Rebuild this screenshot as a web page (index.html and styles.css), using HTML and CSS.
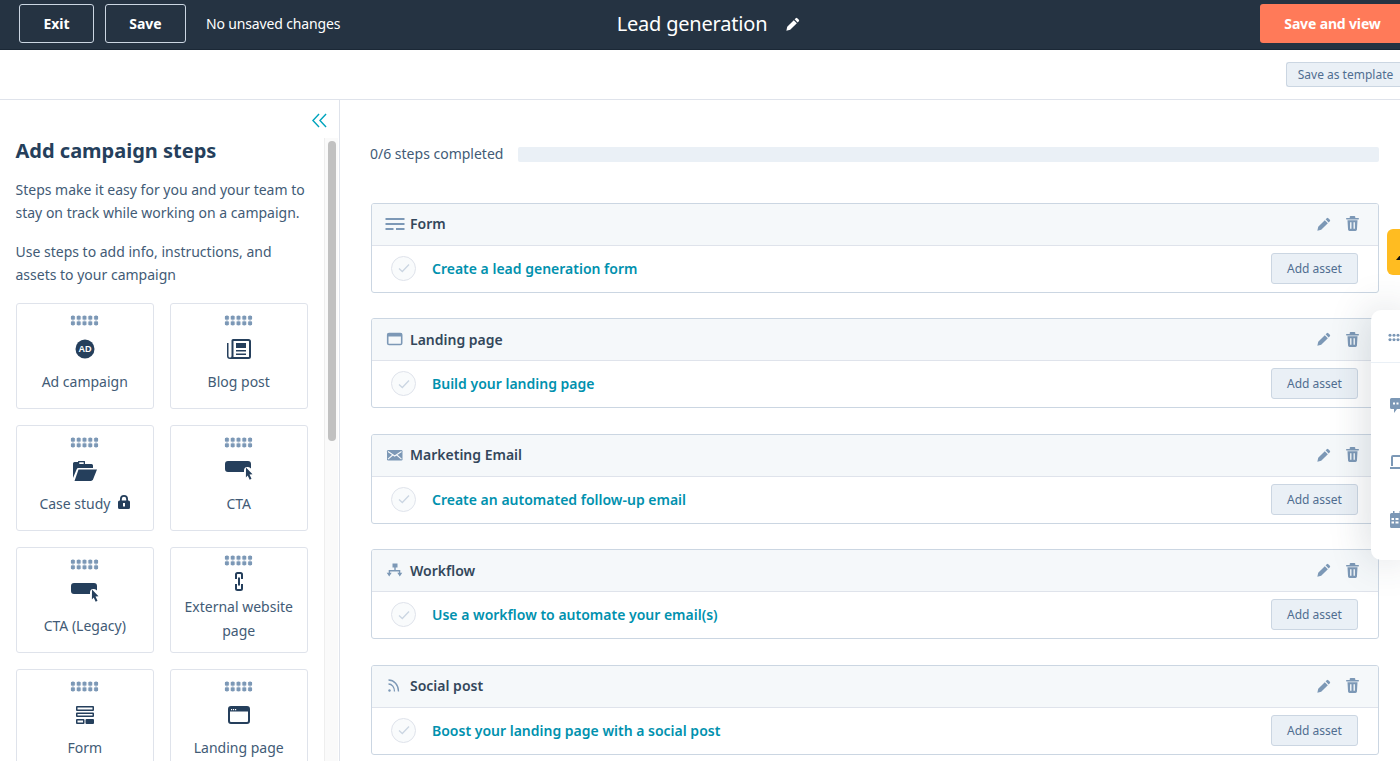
FILE: index.html
```html
<!DOCTYPE html>
<html lang="en">

<head>
    <meta charset="UTF-8">
    <meta name="viewport" content="width=device-width, initial-scale=1.0">
    <title>Lead generation</title>
    <link rel="stylesheet" href="styles.css">
</head>

<body>

    <svg class="sprites" width="0" height="0" aria-hidden="true">
        <symbol id="pencil" viewBox="0 0 16 16">
            <path d="M11.2 1.3a1.2 1.2 0 0 1 1.7 0l1.8 1.8a1.2 1.2 0 0 1 0 1.7l-1.4 1.4-3.5-3.5zM8.9 3.6l3.5 3.5-7.6 7.6-4.4 1 1-4.5z" />
        </symbol>
        <symbol id="trash" viewBox="0 0 14 16">
            <path d="M5 0h4a1 1 0 0 1 1 1v1h3.2a.8.8 0 0 1 0 1.6H.8A.8.8 0 0 1 .8 2H4V1a1 1 0 0 1 1-1z" />
            <path fill-rule="evenodd" d="M1.6 4.6h10.8l-.6 9.9a1.6 1.6 0 0 1-1.6 1.5H3.8a1.6 1.6 0 0 1-1.6-1.5zM4.4 6.6v7h1.5v-7zm3.7 0v7h1.5v-7z" />
        </symbol>
        <symbol id="cta" viewBox="0 0 28 22">
            <path d="M3 1h20a3 3 0 0 1 3 3v4.400a4 4 0 0 0-4-1.400 3.500 3.500 0 0 0-3 3.300v1.700H3a3 3 0 0 1-3-3V4a3 3 0 0 1 3-3z" />
            <path d="M21 7.500l6.500 6.800-3 .3 2 4.200-1.800.9-2-4.300-1.800 2z" />
        </symbol>
    </svg>

    <header class="topbar">
        <div class="topbar-left">
            <button class="btn-dark btn-exit">Exit</button>
            <button class="btn-dark btn-save">Save</button>
            <span class="save-status">No unsaved changes</span>
        </div>
        <div class="topbar-title">
            <span>Lead generation</span>
            <svg class="title-edit" width="14" height="14"><use href="#pencil" /></svg>
        </div>
        <button class="btn-primary">Save and view</button>
    </header>

    <div class="subbar">
        <button class="btn-template">Save as template</button>
    </div>

    <div class="layout">
        <aside class="sidebar">
            <div class="collapse-row">
                <svg width="15" height="15" viewBox="0 0 16 16" fill="none" stroke="#00a4bd" stroke-width="1.500">
                    <path d="M7.500 1L1 8l6.500 7M15 1L8.500 8l6.500 7" />
                </svg>
            </div>
            <div class="sidebar-body">
                <div class="sidebar-content">
                    <h2>Add campaign steps</h2>
                    <p>Steps make it easy for you and your team to stay on track while working on a campaign.</p>
                    <p>Use steps to add info, instructions, and assets to your campaign</p>
                    <div class="step-grid">
                        <div class="step-tile">
                            <span class="grip"></span>
                            <span class="tile-icon">
                                <svg width="20" height="20" viewBox="0 0 20 20">
                                    <circle cx="10" cy="10" r="9.500" fill="#253f5c" />
                                    <text x="10" y="13.200" text-anchor="middle" class="ad-mark">AD</text>
                                </svg>
                            </span>
                            <span class="tile-label">Ad campaign</span>
                        </div>
                        <div class="step-tile">
                            <span class="grip"></span>
                            <span class="tile-icon">
                                <svg width="24" height="20" viewBox="0 0 24 20">
                                    <path fill="#253f5c" fill-rule="evenodd" d="M6 0h15.500A2.500 2.500 0 0 1 24 2.500v15a2.500 2.500 0 0 1-2.500 2.500H3a3 3 0 0 1-3-3V4h1.500v13a1.500 1.500 0 0 0 3 0V1.500A1.500 1.500 0 0 1 6 0zm.500 2v15.500c0 .200 0 .400-.100.500h15.100a.5.500 0 0 0 .500-.500V2.500a.5.500 0 0 0-.500-.500z" />
                                    <path fill="#253f5c" d="M9 4h10v5H9zM9 11h10v1.600H9zM9 14.500h10v1.600H9z" />
                                </svg>
                            </span>
                            <span class="tile-label">Blog post</span>
                        </div>
                        <div class="step-tile">
                            <span class="grip"></span>
                            <span class="tile-icon">
                                <svg width="24" height="20" viewBox="0 0 24 20" fill="#253f5c">
                                    <path d="M0 2.500A1.500 1.500 0 0 1 1.500 1H5V.5a.5.500 0 0 1 .500-.500h6a.5.500 0 0 1 .500.500V3h6.500A1.500 1.500 0 0 1 20 4.500V7H5.500a2 2 0 0 0-1.900 1.400L0 17z" />
                                    <path d="M5.500 8.500H24l-4 10a2.400 2.400 0 0 1-2.200 1.500H1.500z" />
                                    <path fill="#fff" d="M6.300 1.300h4.400V3H6.300z" />
                                </svg>
                            </span>
                            <span class="tile-label">Case study
                                <svg class="lock" width="12" height="14" viewBox="0 0 12 14" fill="#253f5c">
                                    <path fill-rule="evenodd" d="M6 0a4 4 0 0 1 4 4v1.500h.500A1.500 1.500 0 0 1 12 7v5.500a1.500 1.500 0 0 1-1.500 1.500h-9A1.500 1.500 0 0 1 0 12.500V7a1.500 1.500 0 0 1 1.500-1.500H2V4a4 4 0 0 1 4-4zm0 1.800A2.200 2.200 0 0 0 3.800 4v1.500h4.400V4A2.200 2.200 0 0 0 6 1.800zM5 8v3.500h2V8z" />
                                </svg>
                            </span>
                        </div>
                        <div class="step-tile">
                            <span class="grip"></span>
                            <span class="tile-icon"><svg class="icon-cta" width="28" height="22"><use href="#cta" /></svg></span>
                            <span class="tile-label">CTA</span>
                        </div>
                        <div class="step-tile">
                            <span class="grip"></span>
                            <span class="tile-icon"><svg class="icon-cta" width="28" height="22"><use href="#cta" /></svg></span>
                            <span class="tile-label">CTA (Legacy)</span>
                        </div>
                        <div class="step-tile step-tile-tall">
                            <span class="grip"></span>
                            <span class="tile-icon">
                                <svg width="10" height="19" viewBox="0 0 10 19" fill="none" stroke="#253f5c" stroke-width="2">
                                    <path d="M2 7V2.500A1.500 1.500 0 0 1 3.500 1h3A1.500 1.500 0 0 1 8 2.500V7M2 12v4.500A1.500 1.500 0 0 0 3.500 18h3A1.500 1.500 0 0 0 8 16.500V12M5 5.500v8" />
                                </svg>
                            </span>
                            <span class="tile-label">External website page</span>
                        </div>
                        <div class="step-tile">
                            <span class="grip"></span>
                            <span class="tile-icon">
                                <svg width="18" height="18" viewBox="0 0 18 18" fill="#253f5c">
                                    <path fill-rule="evenodd" d="M1 0h16a1 1 0 0 1 1 1v3a1 1 0 0 1-1 1H1a1 1 0 0 1-1-1V1a1 1 0 0 1 1-1zm.500 1.500v2h15v-2z" />
                                    <path fill-rule="evenodd" d="M1 6.500h16a1 1 0 0 1 1 1v2.500a1 1 0 0 1-1 1H1a1 1 0 0 1-1-1V7.500a1 1 0 0 1 1-1zM1.500 8v1.500h15V8z" />
                                    <path fill-rule="evenodd" d="M1 13h6.500a1 1 0 0 1 1 1v3a1 1 0 0 1-1 1H1a1 1 0 0 1-1-1v-3a1 1 0 0 1 1-1zm.500 1.500v2h5.500v-2z" />
                                    <path d="M10.500 13H17a1 1 0 0 1 1 1v3a1 1 0 0 1-1 1h-6.500a1 1 0 0 1-1-1v-3a1 1 0 0 1 1-1z" />
                                </svg>
                            </span>
                            <span class="tile-label">Form</span>
                        </div>
                        <div class="step-tile">
                            <span class="grip"></span>
                            <span class="tile-icon">
                                <svg width="22" height="18" viewBox="0 0 22 18">
                                    <rect x="1" y="1" width="20" height="16" rx="2" fill="none" stroke="#253f5c" stroke-width="2" />
                                    <path fill="#253f5c" d="M1 2h20v3.500H1z" />
                                    <path fill="#fff" d="M3 3h1.200v1.200H3zM5 3h1.200v1.200H5zM7 3h1.200v1.200H7z" />
                                </svg>
                            </span>
                            <span class="tile-label">Landing page</span>
                        </div>
                    </div>
                </div>
                <div class="scroll-track"><div class="scroll-thumb"></div></div>
            </div>
        </aside>

        <main class="main">
            <div class="progress-row">
                <span>0/6 steps completed</span>
                <div class="progress-bar"></div>
            </div>

            <section class="step-card">
                <div class="step-head">
                    <svg width="20" height="14" viewBox="0 0 20 14" fill="#7c98b6">
                        <path d="M.5 1h19v2H.5zM.5 6h19v2H.5zM.5 11h8v2h-8zM11 11h8.500v2H11z" />
                    </svg>
                    <span class="step-name">Form</span>
                    <svg class="act" width="14" height="14"><use href="#pencil" /></svg>
                    <svg class="act" width="13" height="15"><use href="#trash" /></svg>
                </div>
                <div class="step-body">
                    <span class="check"><svg width="12" height="10" viewBox="0 0 12 10" fill="none" stroke="#cbd6e2" stroke-width="1.300"><path d="M1 5.500l3.300 3L11 1.500" /></svg></span>
                    <a class="step-link">Create a lead generation form</a>
                    <button class="btn-asset">Add asset</button>
                </div>
            </section>

            <section class="step-card">
                <div class="step-head">
                    <svg width="20" height="14" viewBox="0 0 20 14">
                        <rect x="2.700" y="1.500" width="14" height="11" rx="1.300" fill="none" stroke="#7c98b6" stroke-width="1.600" />
                        <path fill="#7c98b6" d="M2.700 1.500h14v3h-14z" />
                    </svg>
                    <span class="step-name">Landing page</span>
                    <svg class="act" width="14" height="14"><use href="#pencil" /></svg>
                    <svg class="act" width="13" height="15"><use href="#trash" /></svg>
                </div>
                <div class="step-body">
                    <span class="check"><svg width="12" height="10" viewBox="0 0 12 10" fill="none" stroke="#cbd6e2" stroke-width="1.300"><path d="M1 5.500l3.300 3L11 1.500" /></svg></span>
                    <a class="step-link">Build your landing page</a>
                    <button class="btn-asset">Add asset</button>
                </div>
            </section>

            <section class="step-card">
                <div class="step-head">
                    <svg width="20" height="14" viewBox="0 0 20 14">
                        <rect x="2" y="2" width="15.500" height="10.500" rx="1.200" fill="#7c98b6" />
                        <path d="M3 3.500l6.700 4.500 6.800-4.500M3 11.200l4.700-4.200M16.500 11.200l-4.700-4.200" fill="none" stroke="#f5f8fa" stroke-width="1.100" />
                    </svg>
                    <span class="step-name">Marketing Email</span>
                    <svg class="act" width="14" height="14"><use href="#pencil" /></svg>
                    <svg class="act" width="13" height="15"><use href="#trash" /></svg>
                </div>
                <div class="step-body">
                    <span class="check"><svg width="12" height="10" viewBox="0 0 12 10" fill="none" stroke="#cbd6e2" stroke-width="1.300"><path d="M1 5.500l3.300 3L11 1.500" /></svg></span>
                    <a class="step-link">Create an automated follow-up email</a>
                    <button class="btn-asset">Add asset</button>
                </div>
            </section>

            <section class="step-card">
                <div class="step-head">
                    <svg width="20" height="14" viewBox="0 0 20 14" fill="#7c98b6">
                        <path d="M7.500 .5h5v4h-5z" />
                        <path d="M9.300 4h1.400v3h4.600v3h-1.400V8.400H5.100V10H3.700V7h5.600z" />
                        <path d="M1.700 9.800h5L4.200 13.500zM12.300 9.800h5l-2.500 3.700z" />
                    </svg>
                    <span class="step-name">Workflow</span>
                    <svg class="act" width="14" height="14"><use href="#pencil" /></svg>
                    <svg class="act" width="13" height="15"><use href="#trash" /></svg>
                </div>
                <div class="step-body">
                    <span class="check"><svg width="12" height="10" viewBox="0 0 12 10" fill="none" stroke="#cbd6e2" stroke-width="1.300"><path d="M1 5.500l3.300 3L11 1.500" /></svg></span>
                    <a class="step-link">Use a workflow to automate your email(s)</a>
                    <button class="btn-asset">Add asset</button>
                </div>
            </section>

            <section class="step-card">
                <div class="step-head">
                    <svg width="20" height="14" viewBox="0 0 20 14" fill="none" stroke="#7c98b6" stroke-width="1.300">
                        <path d="M3.500 1c5.500 0 10 4.800 10 11.500M3.500 5c3.500 0 6 3.300 6 7.500" />
                        <circle cx="4.500" cy="11.500" r="1.200" fill="#7c98b6" stroke="none" />
                    </svg>
                    <span class="step-name">Social post</span>
                    <svg class="act" width="14" height="14"><use href="#pencil" /></svg>
                    <svg class="act" width="13" height="15"><use href="#trash" /></svg>
                </div>
                <div class="step-body">
                    <span class="check"><svg width="12" height="10" viewBox="0 0 12 10" fill="none" stroke="#cbd6e2" stroke-width="1.300"><path d="M1 5.500l3.300 3L11 1.500" /></svg></span>
                    <a class="step-link">Boost your landing page with a social post</a>
                    <button class="btn-asset">Add asset</button>
                </div>
            </section>
        </main>
    </div>

    <div class="help-tab"><span class="help-mark"></span></div>

    <div class="side-dock">
        <div class="dock-head"><span class="dock-grip"></span></div>
        <svg class="dock-chat" width="14" height="16" viewBox="0 0 14 16" fill="#7c98b6">
            <path fill-rule="evenodd" d="M1.500 0h11A1.500 1.500 0 0 1 14 1.500v8a1.500 1.500 0 0 1-1.500 1.500H7l-3 4v-4H1.500A1.500 1.500 0 0 1 0 9.500v-8A1.500 1.500 0 0 1 1.500 0zM3 4.500v2h2v-2zm3.500 0v2h2v-2z" />
        </svg>
        <svg class="dock-laptop" width="16" height="16" viewBox="0 0 16 16" fill="none" stroke="#7c98b6" stroke-width="2">
            <path d="M2 12V3a1 1 0 0 1 1-1h13M0 14h16" />
        </svg>
        <svg class="dock-cal" width="14" height="17" viewBox="0 0 14 17" fill="#7c98b6">
            <path fill-rule="evenodd" d="M3 0h1.500v2h5V0H11v2h1.500A1.500 1.500 0 0 1 14 3.500v12a1.500 1.500 0 0 1-1.500 1.500h-11A1.500 1.500 0 0 1 0 15.500v-12A1.500 1.500 0 0 1 1.500 2H3zM1.500 7v2h2.500V7zm4 0v2h3V7zm4.500 0v2h4V7zM1.500 10.500v2h2.500v-2zm4 0v2h3v-2zm4.500 0v2h4v-2z" />
        </svg>
    </div>

</body>

</html>
```

FILE: styles.css
```css
* {
    box-sizing: border-box;
}

html,
body {
    height: 761px;
    overflow: hidden;
}

body {
    font-family: 'Noto Sans', 'Open Sans', sans-serif;
    font-size: 14px;
    color: #33475b;
    background-color: #fff;
    margin: 0;
    padding: 0;
}

button {
    font-family: inherit;
    cursor: pointer;
}

.sprites {
    position: absolute;
}

/* top bar */
.topbar {
    height: 50px;
    background-color: #253342;
    border-bottom: 1px solid #1b2836;
    display: grid;
    grid-template-columns: 1fr auto 1fr;
    align-items: center;
    padding: 0 0 2px 19px;
}

.topbar-left {
    display: flex;
    align-items: center;
}

.btn-dark {
    height: 39px;
    background-color: transparent;
    border: 1.5px solid #cbd6e2;
    border-radius: 3px;
    color: #fff;
    font-size: 14px;
    font-weight: 700;
    padding: 0;
}

.btn-exit {
    width: 75px;
    margin-right: 11px;
}

.btn-save {
    width: 81px;
    margin-right: 20px;
}

.save-status {
    color: #fff;
    font-size: 14px;
    letter-spacing: -0.15px;
}

.topbar-title {
    display: flex;
    align-items: center;
    gap: 19px;
    color: #fff;
    font-size: 20px;
    letter-spacing: -0.2px;
    margin-right: 2px;
}

.title-edit {
    fill: #fff;
}

.btn-primary {
    justify-self: end;
    width: 140px;
    height: 39px;
    background-color: #ff7a59;
    border: none;
    border-radius: 3px 0 0 3px;
    color: #fff;
    font-size: 14px;
    font-weight: 700;
    letter-spacing: -0.15px;
    padding: 0 0 0 5px;
}

.subbar {
    height: 49px;
    display: flex;
    justify-content: flex-end;
    padding-top: 12px;
}

.btn-template {
    width: 114px;
    height: 25px;
    background-color: #eaf0f6;
    border: 1px solid #cbd6e2;
    border-right: none;
    border-radius: 3px 0 0 3px;
    color: #506e91;
    font-size: 12px;
    padding: 0 0 0 4px;
}

/* sidebar + main */
.layout {
    display: flex;
    height: 662px;
    border-top: 1px solid #dfe3eb;
}

.sidebar {
    width: 339.500px;
    flex: none;
    border-right: 1.5px solid #dfe3eb;
    overflow: hidden;
}

.collapse-row {
    height: 38px;
    display: flex;
    justify-content: flex-end;
    align-items: flex-start;
    padding: 13px 12px 0 0;
}

.sidebar-body {
    display: flex;
    height: 631px;
}

.sidebar-content {
    width: 324px;
    flex: none;
    padding: 0 15.500px;
}

.sidebar-content h2 {
    font-size: 20px;
    font-weight: 700;
    line-height: 26px;
    color: #253f5c;
    margin: 0 0 14px;
}

.sidebar-content p {
    line-height: 23px;
    color: #425b76;
    margin: 0 0 16px;
}

.step-grid {
    display: grid;
    grid-template-columns: 138.500px 138.500px;
    grid-auto-rows: 106px;
    gap: 16px 15.500px;
    margin-top: 17px;
}

.step-tile {
    border: 1.5px solid #dfe3eb;
    border-radius: 3px;
    display: flex;
    flex-direction: column;
    align-items: center;
    justify-content: center;
    text-align: center;
    padding-bottom: 3px;
}

.grip {
    width: 29px;
    height: 11px;
    background-image: radial-gradient(circle at center, #7c98b6 2.100px, transparent 2.500px);
    background-size: 5.800px 5.500px;
}

.tile-icon {
    height: 22px;
    margin-top: 12px;
    display: flex;
    align-items: center;
    justify-content: center;
}

.icon-cta {
    fill: #253f5c;
}

.ad-mark {
    font-family: 'Liberation Sans', sans-serif;
    font-size: 9px;
    font-weight: 700;
    fill: #fff;
}

.tile-label {
    line-height: 24px;
    margin-top: 10px;
    color: #425b76;
}

.lock {
    margin-left: 4px;
}

.step-tile-tall .tile-icon {
    margin-top: 5px;
}

.step-tile-tall .tile-label {
    margin-top: 2px;
    padding: 0 10px;
}

.scroll-track {
    width: 14px;
    background-color: #fafafa;
    border-left: 1px solid #eee;
    padding: 3px 2px 0 3px;
}

.scroll-thumb {
    height: 300px;
    background-color: #c1c1c1;
    border-radius: 4px;
}

.main {
    flex: 1;
    padding: 0 21px 0 31.500px;
}

.progress-row {
    display: flex;
    align-items: center;
    gap: 15px;
    height: 16px;
    margin: 46px 0 40.500px -1px;
    color: #425b76;
}

.progress-row span {
    position: relative;
    top: -1px;
}

.progress-bar {
    flex: 1;
    height: 15px;
    background-color: #eaf0f6;
    border-radius: 2px;
}

.step-card {
    height: 90px;
    border: 1.5px solid #cbd6e2;
    border-radius: 3px;
    margin-bottom: 25.500px;
    overflow: hidden;
}

.step-head {
    height: 42px;
    background-color: #f5f8fa;
    border-bottom: 1.5px solid #dfe3eb;
    display: flex;
    align-items: center;
    padding: 0 19px 1px 13px;
}

.step-name {
    flex: 1;
    margin-left: 5px;
    font-weight: 600;
    color: #33475b;
}

.act {
    fill: #7c98b6;
    margin-left: 15px;
}

.step-body {
    height: 45px;
    display: flex;
    align-items: center;
    padding: 0 20px 0 19px;
}

.check {
    width: 25px;
    height: 25px;
    flex: none;
    border: 1.5px solid #dfe3eb;
    border-radius: 50%;
    background-color: #f9fbfc;
    display: flex;
    align-items: center;
    justify-content: center;
}

.step-link {
    flex: 1;
    margin-left: 16px;
    color: #0091ae;
    font-weight: 600;
}

.btn-asset {
    width: 87px;
    height: 31px;
    background-color: #eaf0f6;
    border: 1px solid #cbd6e2;
    border-radius: 3px;
    color: #506e91;
    font-size: 12px;
    padding: 0;
}

/* things that float over the right edge */
.help-tab {
    position: absolute;
    top: 229px;
    right: 0;
    width: 13px;
    height: 46px;
    background-color: #ffbc21;
    border-radius: 6px 0 0 6px;
    overflow: hidden;
}

.help-mark {
    position: absolute;
    left: 9px;
    top: 25px;
    border-left: 5px solid transparent;
    border-right: 5px solid transparent;
    border-bottom: 6px solid #111;
}

.side-dock {
    position: absolute;
    top: 310px;
    right: 0;
    width: 29px;
    height: 250px;
    background-color: #fff;
    border-radius: 10px 0 0 10px;
    box-shadow: 0 0 40px rgba(45, 62, 80, 0.22);
    overflow: hidden;
}

.side-dock svg {
    position: absolute;
    left: 19px;
}

.dock-head {
    height: 53px;
    border-bottom: 1px solid #eaf0f6;
    padding: 23px 0 0 17px;
}

.dock-grip {
    display: block;
    width: 12px;
    height: 9px;
    background-image: radial-gradient(circle at center, #7c98b6 1.400px, transparent 1.800px);
    background-size: 4px 4.500px;
}

.dock-chat {
    top: 88px;
}

.dock-laptop {
    top: 144px;
}

.dock-cal {
    top: 201px;
}
```
